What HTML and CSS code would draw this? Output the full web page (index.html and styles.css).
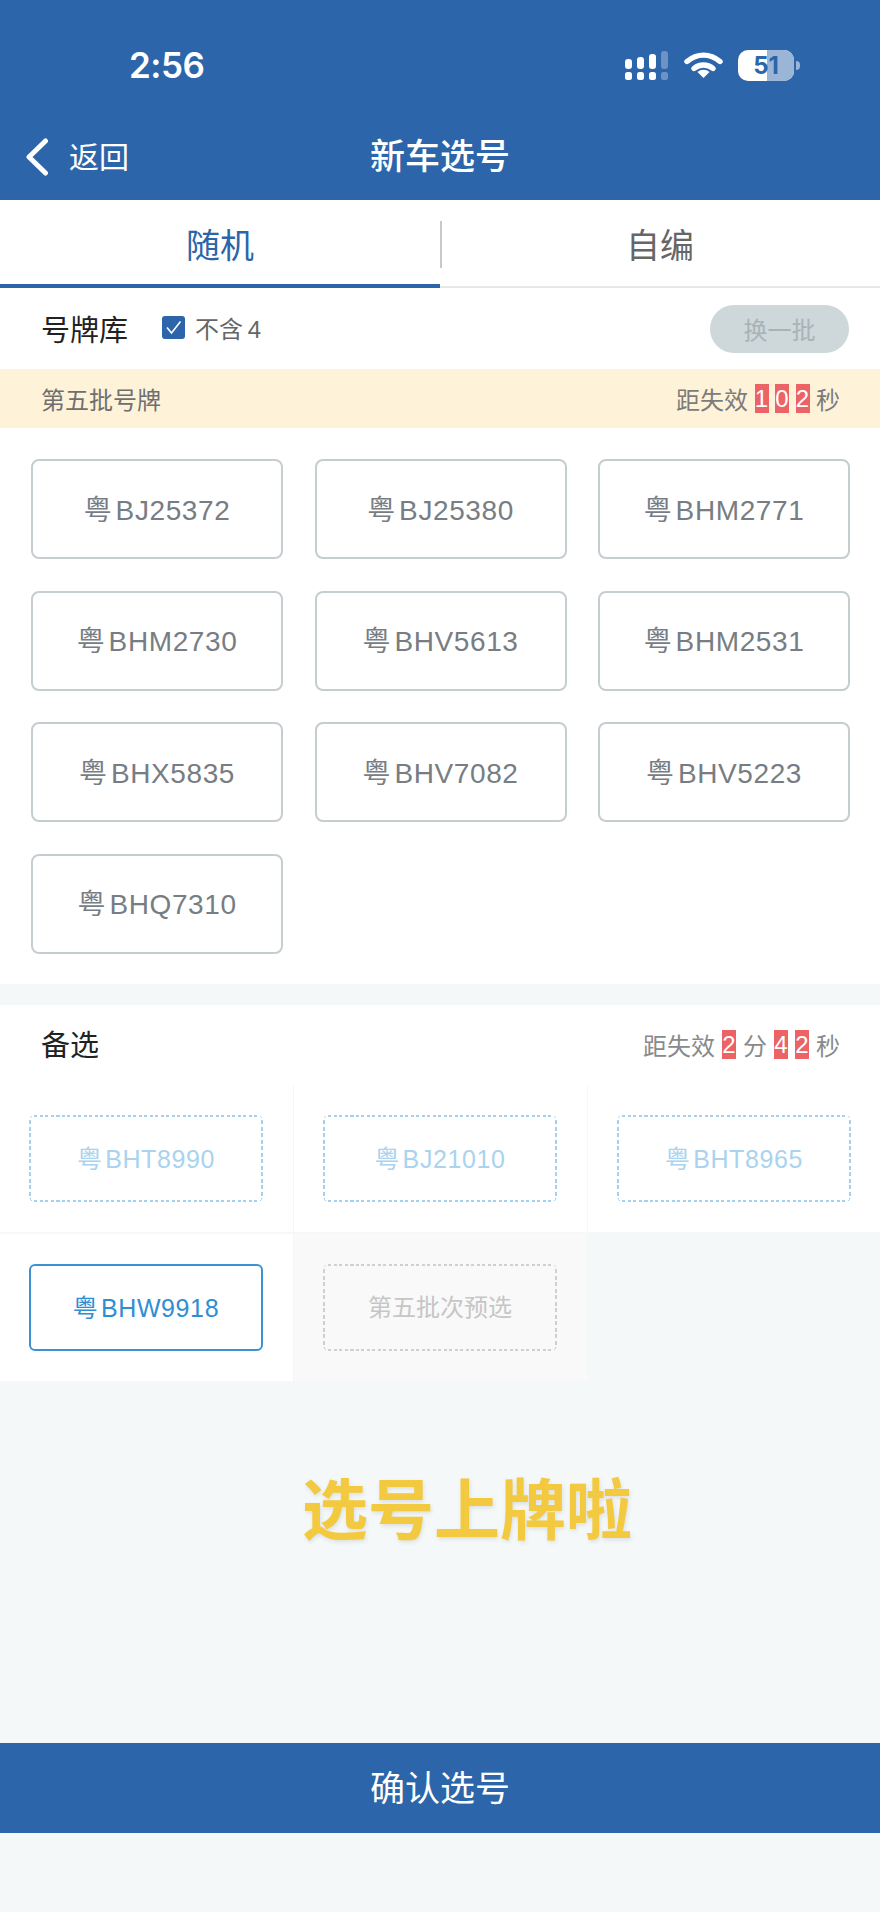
FILE: index.html
```html
<!DOCTYPE html>
<html lang="zh-CN">
<head>
    <meta charset="utf-8">
    <title>新车选号</title>
    <link rel="stylesheet" href="styles.css">
</head>
<body>
    <div class="header">
        <div class="status">
            <span class="status_time">2:56</span>
            <div class="status_icons">
                <svg class="signal" width="44" height="26" viewBox="0 0 44 26">
                    <g fill="#fff">
                        <rect x="0" y="5" width="7" height="10" rx="3"/>
                        <rect x="12" y="3" width="7" height="12" rx="3"/>
                        <rect x="24" y="0" width="7" height="15" rx="3"/>
                        <rect x="0" y="18" width="7" height="8" rx="2.5"/>
                        <rect x="12" y="18" width="7" height="8" rx="2.5"/>
                        <rect x="24" y="18" width="7" height="8" rx="2.5"/>
                    </g>
                    <g fill="#fff" opacity="0.3">
                        <rect x="36" y="-3" width="7" height="18" rx="3"/>
                        <rect x="36" y="18" width="7" height="8" rx="2.5"/>
                    </g>
                </svg>
                <svg class="wifi" width="39" height="26" viewBox="0 0 39 26">
                    <path d="M3 9.5C13 1 26 1 36 9.5" fill="none" stroke="#fff" stroke-width="5.4" stroke-linecap="round"/>
                    <path d="M10 16.5C15.500 11.800 23.500 11.800 29 16.500" fill="none" stroke="#fff" stroke-width="5.400" stroke-linecap="round"/>
                    <path d="M19.500 26L13.500 20C17 17 22 17 25.500 20Z" fill="#fff"/>
                </svg>
                <div class="battery">
                    <div class="battery_body">
                        <div class="battery_fill"></div>
                        <span class="battery_text">51</span>
                    </div>
                    <div class="battery_cap"></div>
                </div>
            </div>
        </div>
        <div class="nav">
            <div class="nav_back">
                <svg width="24" height="38" viewBox="0 0 24 38">
                    <path d="M20.500 3L4 19L20.500 35" fill="none" stroke="#fff" stroke-width="5" stroke-linecap="round" stroke-linejoin="round"/>
                </svg>
                <span>返回</span>
            </div>
            <div class="nav_title">新车选号</div>
        </div>
    </div>

    <div class="tabs">
        <div class="tab tab-on">随机</div>
        <div class="tab tab-off">自编</div>
    </div>

    <div class="toolbar">
        <span class="toolbar_title">号牌库</span>
        <span class="check">
            <svg width="19" height="17" viewBox="0 0 19 17">
                <path d="M3 8.500L7.500 14L16.500 2.500" fill="none" stroke="#fff" stroke-width="1.600"/>
            </svg>
        </span>
        <span class="check_label">不含 4</span>
        <button type="button" class="swap-button">换一批</button>
    </div>

    <div class="notice">
        <span>第五批号牌</span>
        <span class="timer">距失效<b>1</b><b>0</b><b>2</b><i>秒</i></span>
    </div>

    <div class="plates">
        <div class="plate">粤 BJ25372</div>
        <div class="plate">粤 BJ25380</div>
        <div class="plate">粤 BHM2771</div>
        <div class="plate">粤 BHM2730</div>
        <div class="plate">粤 BHV5613</div>
        <div class="plate">粤 BHM2531</div>
        <div class="plate">粤 BHX5835</div>
        <div class="plate">粤 BHV7082</div>
        <div class="plate">粤 BHV5223</div>
        <div class="plate">粤 BHQ7310</div>
    </div>

    <div class="backup_head">
        <span class="toolbar_title">备选</span>
        <span class="timer timer-gray">距失效<b>2</b><i>分</i><b>4</b><b>2</b><i>秒</i></span>
    </div>

    <div class="backup">
        <div class="cell"><div class="slot">粤 BHT8990</div></div>
        <div class="cell"><div class="slot">粤 BJ21010</div></div>
        <div class="cell"><div class="slot">粤 BHT8965</div></div>
        <div class="cell"><div class="slot slot-on">粤 BHW9918</div></div>
        <div class="cell cell-gray"><div class="slot slot-empty">第五批次预选</div></div>
    </div>

    <div class="banner">选号上牌啦</div>

    <div class="confirm">确认选号</div>
</body>
</html>
```

FILE: styles.css
```css
*{
    box-sizing: border-box;
}
body{
    margin: 0;
    width: 880px;
    height: 1912px;
    overflow: hidden;
    background-color: #f5f8f9;
    font-family: "Liberation Sans", "Noto Sans CJK SC", sans-serif;
}
.header{
    height: 200px;
    background-color: #2c65a9;
    color: #fff;
}
.status{
    height: 130px;
    padding: 0 80px 0 129px;
    display: flex;
    align-items: center;
    justify-content: space-between;
}
.status_time{
    font-family: "Inter", sans-serif;
    font-size: 35px;
    font-weight: 600;
    letter-spacing: -0.5px;
}
.status_icons{
    display: flex;
    align-items: center;
}
.signal{
    overflow: visible;
    margin-top: 4px;
}
.wifi{
    margin-left: 15px;
}
.battery{
    margin-left: 15px;
    display: flex;
    align-items: center;
}
.battery_body{
    position: relative;
    width: 56px;
    height: 31px;
    border-radius: 10px;
    background-color: #fff;
    overflow: hidden;
}
.battery_fill{
    position: absolute;
    top: 0;
    right: 0;
    width: 27px;
    height: 31px;
    background-color: #9bb5d6;
}
.battery_text{
    position: absolute;
    top: 0;
    left: 0;
    width: 56px;
    line-height: 31px;
    text-align: center;
    font-family: "Inter", sans-serif;
    font-size: 24px;
    font-weight: 700;
    color: #2c65a9;
}
.battery_cap{
    width: 4px;
    height: 9px;
    margin-left: 2px;
    border-radius: 0 4px 4px 0;
    background-color: #9bb5d6;
}
.nav{
    position: relative;
    height: 54px;
    display: flex;
    align-items: center;
    justify-content: center;
}
.nav_back{
    position: absolute;
    left: 25px;
    top: 0;
    height: 54px;
    display: flex;
    align-items: center;
    font-size: 30px;
}
.nav_back span{
    margin: 0 0 4px 20px;
}
.nav_title{
    margin-bottom: 7px;
    font-size: 35px;
    font-weight: 500;
}
.tabs{
    display: flex;
    height: 88px;
    background-color: #fff;
}
.tab{
    position: relative;
    width: 440px;
    font-size: 34px;
    line-height: 92px;
    text-align: center;
}
.tab-on{
    color: #2c65a9;
    border-bottom: 4px solid #2c65a9;
}
.tab-off{
    color: #666;
    border-bottom: 2px solid #e6e7e9;
}
.tab-off::before{
    content: "";
    position: absolute;
    left: 0;
    top: 21px;
    width: 2px;
    height: 47px;
    background-color: #c9c9c9;
}
.toolbar{
    height: 81px;
    padding: 0 31px 0 41px;
    display: flex;
    align-items: center;
    background-color: #fff;
}
.toolbar_title{
    margin-bottom: 2px;
    font-size: 29px;
    color: #222;
}
.check{
    width: 23px;
    height: 23px;
    margin: 0 0 2px 34px;
    border-radius: 3px;
    background-color: #2c65a9;
    display: flex;
    align-items: center;
    justify-content: center;
}
.check_label{
    margin: 0 0 2px 10px;
    font-size: 24px;
    color: #666;
    word-spacing: -2px;
}
.swap-button{
    margin-left: auto;
    width: 139px;
    height: 48px;
    padding: 0;
    border: none;
    border-radius: 24px;
    background-color: #ced8da;
    color: #a9b3b6;
    font-family: inherit;
    font-size: 24px;
}
.notice{
    height: 59px;
    padding: 0 40px 1px 41px;
    display: flex;
    align-items: center;
    justify-content: space-between;
    background-color: #fef3d9;
    font-size: 24px;
    color: #6f6f6f;
}
.timer{
    display: flex;
    align-items: center;
    color: #7c7c7c;
}
.timer-gray{
    font-size: 24px;
    color: #8a8a8a;
}
.timer b{
    min-width: 14px;
    height: 29px;
    margin-left: 6.500px;
    background-color: #ec6365;
    color: #fff;
    font-weight: normal;
    line-height: 29px;
    text-align: center;
}
.timer i{
    margin-left: 6.500px;
    font-style: normal;
}
.timer-gray b, .timer-gray i{
    margin-left: 7px;
}
.plates{
    padding: 31px 30px 30px 31px;
    display: grid;
    grid-template-columns: repeat(3, 252px);
    grid-auto-rows: 100px;
    column-gap: 31.500px;
    row-gap: 31.500px;
    background-color: #fff;
}
.plate{
    padding-bottom: 3px;
    border: 2px solid #c6cdd0;
    border-radius: 8px;
    display: flex;
    align-items: center;
    justify-content: center;
    font-size: 28px;
    color: #777d83;
    letter-spacing: 0.6px;
    word-spacing: -5px;
    white-space: pre;
}
.backup_head{
    height: 80px;
    margin-top: 21px;
    padding: 0 40px 0 41px;
    display: flex;
    align-items: center;
    justify-content: space-between;
    background-color: #fff;
}
.backup_head .toolbar_title{
    margin-bottom: 4px;
}
.backup{
    display: grid;
    grid-template-columns: 293px 293px 292px;
    grid-auto-rows: 147px;
    column-gap: 1px;
    row-gap: 2px;
}
.cell{
    padding: 30px 0 30px 29px;
    background-color: #fff;
}
.cell-gray{
    background-color: #f9f9f9;
}
/* chrome's dashed border is too long here, so the dashes are drawn by hand */
.slot{
    --dash: #a5d1ee;
    width: 234px;
    height: 87px;
    padding-bottom: 3px;
    border-radius: 6px;
    background-image:
        repeating-linear-gradient(90deg, var(--dash) 0 3px, transparent 3px 5.500px),
        repeating-linear-gradient(90deg, var(--dash) 0 3px, transparent 3px 5.500px),
        repeating-linear-gradient(0deg, var(--dash) 0 4px, transparent 4px 6.500px),
        repeating-linear-gradient(0deg, var(--dash) 0 4px, transparent 4px 6.500px);
    background-size: 100% 2px, 100% 2px, 2px 100%, 2px 100%;
    background-position: 0 0, 0 100%, 0 0, 100% 0;
    background-repeat: no-repeat;
    display: flex;
    align-items: center;
    justify-content: center;
    font-size: 25px;
    color: #a9d3ee;
    letter-spacing: 0.6px;
    word-spacing: -5px;
    white-space: pre;
}
.slot-on{
    background-image: none;
    border: 2px solid #3a93d0;
    color: #2f8ed2;
}
.slot-empty{
    --dash: #cfcfcf;
    font-size: 24px;
    color: #c6c6c6;
    letter-spacing: 0;
}
.banner{
    height: 362px;
    padding: 97px 0 0 302px;
    font-size: 66px;
    line-height: 66px;
    font-weight: 700;
    color: #f3c93f;
    text-shadow: 1px 2px 4px rgba(0, 0, 0, 0.1);
}
.confirm{
    height: 90px;
    background-color: #2c65a9;
    color: #fff;
    font-size: 35px;
    line-height: 91px;
    text-align: center;
}
```
